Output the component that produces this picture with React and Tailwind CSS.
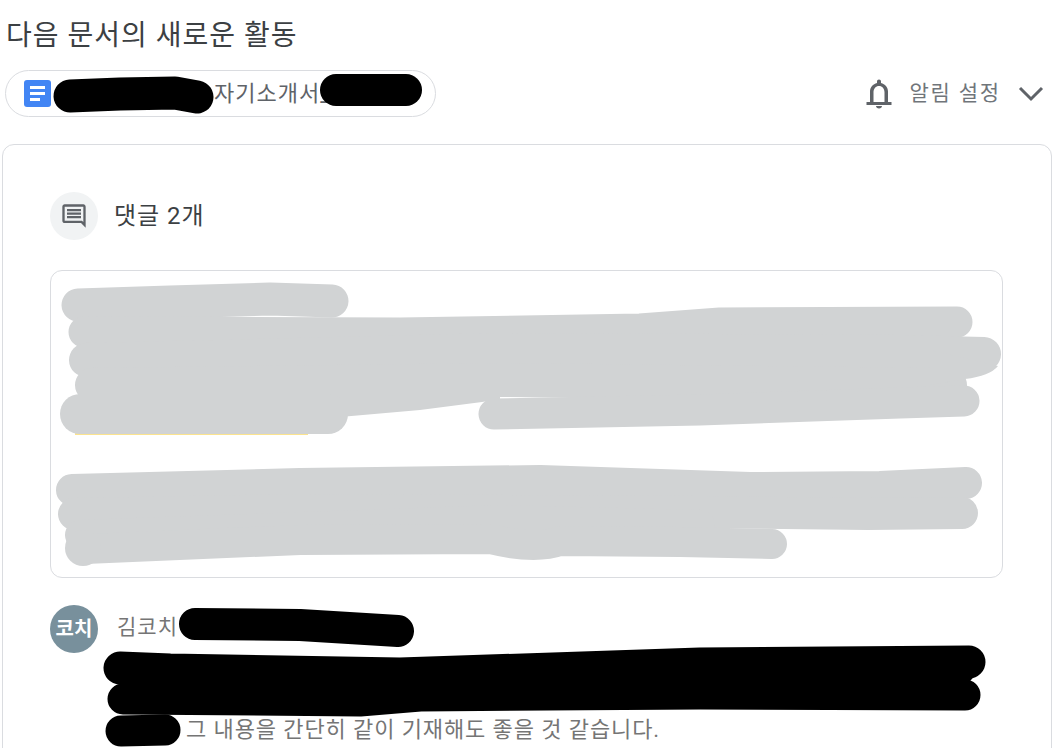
// marker scribbles that were drawn over the screenshot
const Scribbles = () => (
  <svg className="absolute left-0 top-0 pointer-events-none" width="1063" height="748" viewBox="0 0 1063 748" fill="none">
    {/* yellow highlight peeking out under the gray */}
    <rect x="75" y="431" width="233" height="4" fill="#fbe38e" />

    <g stroke="#d1d3d4" strokeLinecap="round" strokeLinejoin="round">
      <path d="M78 305 L170 302 L270 299 L332 301" strokeWidth="33" />
      <path d="M84 332 L400 333 L640 329 L720 323 L957 322" strokeWidth="31" />
      <path d="M86 360 L500 350 L900 352 L984 354" strokeWidth="34" />
      <path d="M92 385 L500 380 L950 385" strokeWidth="34" />
      <path d="M80 414 L328 414" strokeWidth="40" />
      <path d="M494 414 L700 410 L900 403 L964 401" strokeWidth="31" />
      <path d="M72 490 L300 484 L540 481 L750 488 L880 487 L966 483" strokeWidth="32" />
      <path d="M74 514 L300 510 L700 512 L868 514 L962 513" strokeWidth="32" />
      <path d="M80 535 L500 520 L700 525" strokeWidth="30" />
      <path d="M85 549 L300 540 L490 539 Q535 550 560 541 L680 542 L772 544" strokeWidth="30" />
    </g>
    <circle cx="83" cy="548" r="18" fill="#d1d3d4" />
    <path d="M340 417 L420 410 L482 402 L500 399 L500 370 L340 370 Z" fill="#d1d3d4" />
    <path d="M930 385 L965 379 Q990 376 998 366 L930 350 Z" fill="#d1d3d4" />

    <g stroke="#000" strokeLinecap="round" strokeLinejoin="round">
      <path d="M70 96 L120 94 L175 93 L197 97" strokeWidth="33" />
      <path d="M336 90 L406 90" strokeWidth="32" />
      <path d="M195 624 L300 625 L398 631" strokeWidth="32" />
      <path d="M120 668 L170 670 L400 674 L700 664 L969 662" strokeWidth="33" />
      <path d="M300 680 L700 670 L960 670" strokeWidth="30" />
      <path d="M123 699 L360 701 L420 696 L700 694 L965 695" strokeWidth="31" />
      <path d="M121 731 L165 730" strokeWidth="31" />
    </g>
  </svg>
);

const DocIcon = () => (
  <div className="w-[27px] h-[27px] rounded-[3px] bg-[#4285f4] flex flex-col justify-center items-start gap-[3px] pl-[6px] shrink-0">
    <div className="w-[15px] h-[3px] bg-white" />
    <div className="w-[15px] h-[3px] bg-white" />
    <div className="w-[10px] h-[3px] bg-white" />
  </div>
);

const BellIcon = () => (
  <svg width="28" height="30" viewBox="0 0 28 30" fill="#5f6368">
    <path d="M14 0.500c-1.200 0-2 .9-2 2V4C8 5 5 8.400 5 12.500V23H1.500v3h25v-3H23V12.500C23 8.400 20 5 16 4V2.500c0-1.100-.8-2-2-2zm0 6.500c3.200 0 5.500 2.600 5.500 6.200V23h-11v-9.800C8.500 9.600 10.800 7 14 7z" />
    <path d="M11 27h6c0 1.400-1.300 2.500-3 2.500s-3-1.100-3-2.500z" />
  </svg>
);

const CommentIcon = () => (
  <svg width="28" height="28" viewBox="0 0 24 24" fill="#5f6368">
    <path d="M21.990 4c0-1.100-.89-2-1.990-2H4c-1.100 0-2 .9-2 2v12c0 1.100.9 2 2 2h14l4 4-.01-18zM20 4v13.170L18.830 16H4V4h16zM6 12h12v2H6zm0-3h12v2H6zm0-3h12v2H6z" />
  </svg>
);

const App = () => {
  return (
    <div className="relative w-[1063px] h-[748px] overflow-hidden bg-white font-['Roboto','Noto_Sans_CJK_KR',sans-serif] text-[#3c4043]">
      <h1 className="pl-[6px] pt-[16px] h-[70px] text-[28px] leading-[40px] tracking-[1px] font-normal">다음 문서의 새로운 활동</h1>

      <div className="flex items-center justify-between pl-[5px] pr-[19px]">
        <div className="w-[431px] h-[47px] rounded-full border border-[#dadce0] flex items-center pl-[18px]">
          <DocIcon />
          <span className="ml-[163px] text-[22px] tracking-[1px] text-[#5f6368] whitespace-nowrap">자기소개서_</span>
        </div>
        <div className="flex items-center">
          <BellIcon />
          <span className="ml-[17px] text-[21px] tracking-[1.8px] text-[#70757a]">알림 설정</span>
          <svg className="ml-[17px]" width="26" height="16" viewBox="0 0 26 16" fill="none" stroke="#5f6368" strokeWidth="3">
            <path d="M2 2 L13 13 L24 2" />
          </svg>
        </div>
      </div>

      <div className="ml-[2px] mt-[27px] w-[1050px] h-[700px] rounded-t-xl border border-[#dadce0] pt-[47px] pl-[47px] pr-[48px]">
        <div className="flex items-center gap-4">
          <div className="w-12 h-12 rounded-full bg-[#f1f3f4] flex items-center justify-center">
            <CommentIcon />
          </div>
          <span className="text-[24px] tracking-[1px]">댓글 2개</span>
        </div>

        <div className="mt-[30px] h-[308px] rounded-xl border border-[#dadce0]" />

        <div className="mt-[27px] flex items-start">
          <div className="w-12 h-12 rounded-full bg-[#78909c] text-white font-bold text-[20px] flex items-center justify-center shrink-0">코치</div>
          <span className="ml-[19px] mt-[6px] text-[21px] leading-[32px] tracking-[1px] text-[#757575]">김코치</span>
        </div>
        <p className="mt-[62px] pl-[136px] text-[22px] leading-[30px] tracking-[0.9px] text-[#757575] whitespace-nowrap">그 내용을 간단히 같이 기재해도 좋을 것 같습니다.</p>
      </div>

      <Scribbles />
    </div>
  );
};

export default App;
